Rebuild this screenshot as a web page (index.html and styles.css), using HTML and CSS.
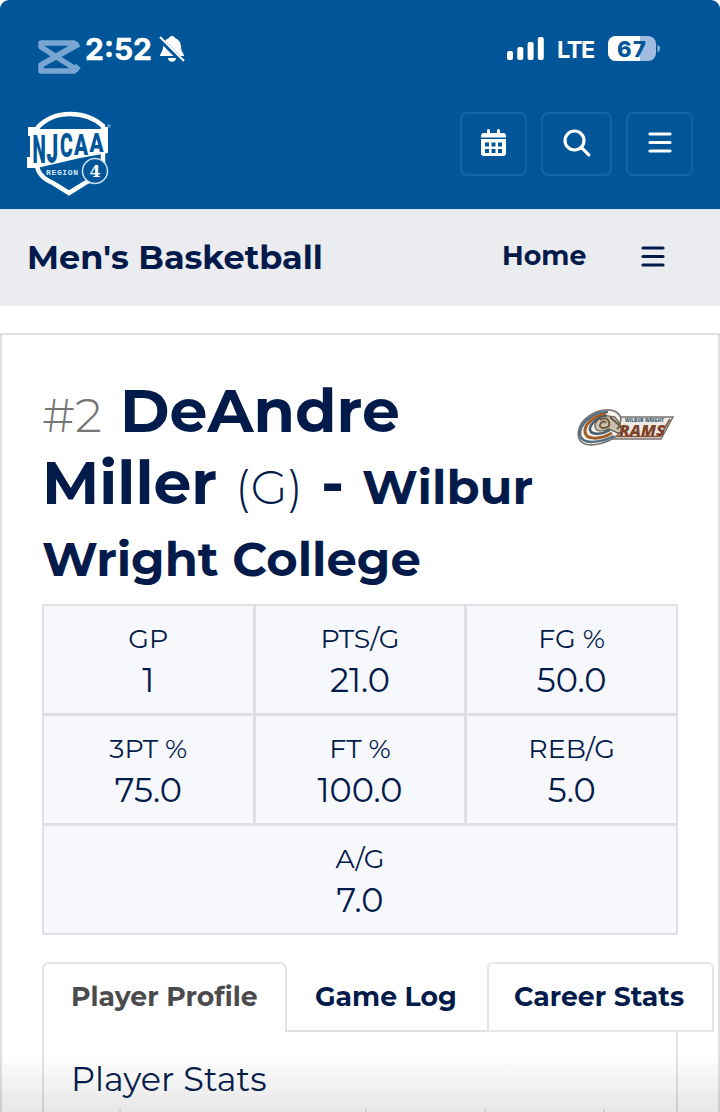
FILE: index.html
```html
<!DOCTYPE html>
<html lang="en">
<head>
<meta charset="utf-8">
<title>DeAndre Miller - Men's Basketball</title>
<link rel="stylesheet" href="styles.css">
</head>
<body>
<div class="screen">
  <header class="masthead">
    <div class="status">
      <svg class="watermark" width="46" height="40" viewBox="0 0 46 40"><path d="M44 7 6 28v6h33v-3L6 10V6h33v3L6 28M39 29l5 4" fill="none" stroke="currentColor" stroke-width="5.500" stroke-linejoin="round"/></svg>
      <span class="time">2:52</span>
      <svg class="bell" width="26" height="28" viewBox="0 0 26 28"><path d="M13 1c2 0 2.500 1 3 2 4 1.500 6 4.500 6 9 0 5 3 6 3 9H1c0-3 3-4 3-9 0-4.500 2-7.500 6-9 .5-1 1-2 3-2zM9 23h8c0 5-8 5-8 0z" fill="#fff"/><path d="M0 3 24 27" stroke="#005698" stroke-width="5"/><path d="M1 2 25 26" stroke="#fff" stroke-width="2"/></svg>
      <svg class="signal" width="37" height="24" viewBox="0 0 37 24" fill="#fff"><rect y="14" width="6" height="9" rx="2"/><rect x="10.300" y="10" width="6" height="13" rx="2"/><rect x="20.600" y="5" width="6" height="18" rx="2"/><rect x="30.800" width="6" height="23" rx="2"/></svg>
      <span class="network">LTE</span>
      <svg class="battery" width="53" height="26" viewBox="0 0 53 26"><rect width="48" height="25" rx="8" fill="#a2bce0"/><path d="M8 0h24v25H8a8 8 0 0 1-8-8V8a8 8 0 0 1 8-8z" fill="#fff"/><path d="M49.500 8.500q5 4 0 8z" fill="#8fb2d9"/><text x="9" y="20.500" class="charge" textLength="29">67</text></svg>
    </div>
    <div class="brandbar">
      <svg class="logo" width="88" height="86" viewBox="0 0 88 86">
        <path d="M12 18Q25 4 45 4t33 12v41Q75 67 60 73L44 83 28 73Q12 66 12 54V49" fill="none" stroke="#fff" stroke-width="4.500"/>
        <path d="M3 17h12v2h63v-2h5v26L55 48 12 58H2V47h3V26H3z" fill="#fff"/>
        <g class="logo-word">
          <text transform="translate(7.500 53) scale(1.050 2.200)">N</text>
          <text transform="translate(21.500 53) scale(1.150 2.250)">J</text>
          <text transform="translate(35 47) scale(1.080 1.800)">C</text>
          <text transform="translate(49 44.500) scale(1.150 1.650)">A</text>
          <text transform="translate(64.500 42) scale(1.150 1.480)">A</text>
        </g>
        <text class="logo-region" x="21" y="65" textLength="32">REGION</text>
        <circle cx="70" cy="61" r="12.500" fill="#005698" stroke="#cfe3f5" stroke-width="1.500"/>
        <circle cx="84" cy="16" r="1.800" fill="#5c9acb"/>
        <text class="logo-num" x="70" y="66.500" text-anchor="middle">4</text>
      </svg>
      <nav class="actions">
        <span class="action"><svg width="25" height="28" viewBox="0 0 25 28"><path d="M3 4h3V1.500a1.500 1.500 0 0 1 3 0V4h7V1.500a1.500 1.500 0 0 1 3 0V4h3q3 0 3 3v1.500H0V7q0-3 3-3zM0 10h25v14q0 3-3 3H3q-3 0-3-3z" fill="#fff"/><path d="M4 13.500h4v4H4zm6.500 0h4v4h-4zm6.500 0h4v4h-4zM4 20h4v4H4zm6.500 0h4v4h-4zm6.500 0h4v4h-4z" fill="#005698"/></svg></span>
        <span class="action action-search"><svg width="28" height="28" viewBox="0 0 28 28" fill="none" stroke="#fff" stroke-width="3.200" stroke-linecap="round"><circle cx="11.500" cy="11.500" r="9.500"/><path d="m18.800 18.800 7 7"/></svg></span>
        <span class="action"><svg width="24" height="22" viewBox="0 0 24 22" stroke="#fff" stroke-width="3.200" stroke-linecap="round"><path d="M2 2h20M2 10.500h20M2 19h20"/></svg></span>
      </nav>
    </div>
  </header>
  <div class="sportbar">
    <strong class="sport">Men's Basketball</strong>
    <span class="home">Home</span>
    <svg width="24" height="22" viewBox="0 0 24 22" stroke="#031b4a" stroke-width="3.200" stroke-linecap="round"><path d="M2 2h20M2 10.500h20M2 19h20"/></svg>
  </div>
  <main class="card">
    <div class="player">
      <h1 class="name">
        <span class="line"><span class="number">#2</span><span class="big first">DeAndre</span></span>
        <span class="line"><span class="big last">Miller</span><span class="position">(G)</span><span class="big dash">-</span><span class="school">Wilbur</span></span>
        <span class="line college"><span class="school">Wright College</span></span>
      </h1>
      <svg class="rams" width="98" height="40" viewBox="0 0 98 40">
        <path d="M39 9h57L84 31H34z" fill="#eee9e2" stroke="#77736f" stroke-width="1.500"/>
        <path d="M35 28.500h48L93 11" fill="none" stroke="#855038" stroke-width="1.600"/>
        <path d="M44 10C40-1 24 0 12 8-1 17-2 32 8 36c10 3 24-2 33-9z" fill="#f5f2ec" stroke="#777" stroke-width="1.700"/>
        <path d="M31 4C14 4 2 17 3 27c2 10 20 8 34 1" fill="none" stroke="#536e80" stroke-width="2.500"/>
        <path d="M29 6C16 8 7 17 8 24c1 8 15 8 27 1" fill="none" stroke="#a45c22" stroke-width="3"/>
        <path d="M30 8c-10 1-18 9-17 14 2 6 13 4 20 0" fill="none" stroke="#425d70" stroke-width="2.500"/>
        <path d="M32 8c-8-1-15 6-14 11 1 6 10 4 14 2l9 4 4-1-2-8-5-7z" fill="#cbc0ae" stroke="#5b5953" stroke-width="1.200"/>
        <path d="M23 12q7-4 9 2t-6 6q-5-1-2-5 3-3 5 0M33 9l10 9-3 3" fill="none" stroke="#68543b" stroke-width="1.800"/>
        <text class="rams-top" x="48" y="14" textLength="39" lengthAdjust="spacingAndGlyphs">WILBUR WRIGHT</text>
        <text class="rams-word" x="42" y="27.500" textLength="46" lengthAdjust="spacingAndGlyphs">RAMS</text>
      </svg>
    </div>
    <div class="stats">
      <div class="stat"><span class="label">GP</span><span class="value">1</span></div>
      <div class="stat"><span class="label">PTS/G</span><span class="value">21.0</span></div>
      <div class="stat"><span class="label">FG %</span><span class="value">50.0</span></div>
      <div class="stat"><span class="label">3PT %</span><span class="value">75.0</span></div>
      <div class="stat"><span class="label">FT %</span><span class="value">100.0</span></div>
      <div class="stat"><span class="label">REB/G</span><span class="value">5.0</span></div>
      <div class="stat wide"><span class="label">A/G</span><span class="value">7.0</span></div>
    </div>
    <div class="tabs">
      <span class="tab active">Player Profile</span>
      <span class="tab log">Game Log</span>
      <span class="tab career">Career Stats</span>
    </div>
    <section class="panel">
      <h2 class="panel-title">Player Stats</h2>
      <div class="panel-table"><i></i><i></i><i></i><i></i><i></i></div>
    </section>
  </main>
  <div class="fade"></div>
</div>
</body>
</html>
```
FILE: styles.css
```css
* { box-sizing: border-box; }
body { margin: 0; background: #fff; color: #031b4a; font-family: Montserrat, Inter, sans-serif; }
svg { display: block; flex: none; }
.screen { position: relative; width: 720px; height: 1112px; overflow: hidden; }
.masthead { height: 209px; background: #005698; border-radius: 9px 9px 0 0; color: #fff; }
.status { height: 112px; padding: 0 59px 0 35px; display: flex; align-items: flex-start; font-family: Inter, sans-serif; font-weight: 700; }
.watermark { margin-top: 37px; color: #78a5d1; }
.time { margin: 31px 0 0 4px; width: 69px; font-size: 30px; line-height: 36px; white-space: nowrap; -webkit-text-stroke: .4px #fff; }
.bell { margin: 35px 0 0 5px; }
.signal { margin: 37px 0 0 auto; }
.network { margin: 34px 0 0 13px; width: 38px; font-size: 23.5px; line-height: 32px; letter-spacing: -1.4px; font-weight: 700; }
.battery { margin: 36px 0 0 13px; }
.charge { font: 800 22px Inter, sans-serif; fill: #005698; }
.brandbar { display: flex; justify-content: space-between; padding: 0 27px 0 25px; align-items: flex-start; }
.logo { margin-top: -2px; overflow: visible; }
.logo-word { font: 900 18px Roboto, sans-serif; fill: #005698; }
.logo-region { font: 600 8px "Liberation Mono", monospace; fill: #d8e9fb; }
.logo-num { font: bold 16px "DejaVu Serif", serif; fill: #fff; }
.actions { display: flex; gap: 14px; }
.action { width: 67px; height: 64px; border: 2px solid #0f66a8; border-radius: 7px; display: flex; align-items: center; justify-content: center; padding-bottom: 3px; }
.action-search { width: 71px; }
.sportbar { height: 97px; padding: 0 55px 0 27px; background: #ebecef; border-top: 1px solid #d6e5ef; display: flex; align-items: center; }
.sport { font-size: 33.5px; line-height: 40px; flex: 1; white-space: nowrap; margin-bottom: 2px; }
.home { font-size: 26.800px; line-height: 32px; font-weight: 700; width: 84px; margin: 0 55px 4px 0; }
.sportbar svg { margin-bottom: 3px; }
.card { margin-top: 27px; height: 800px; border: 2px solid #dfe0e3; padding: 40px 0 0 40px; }
.player { display: flex; justify-content: space-between; padding-right: 43px; height: 229px; }
.name { margin: 0; font-size: 60px; font-weight: 700; }
.line { display: flex; align-items: baseline; height: 72px; line-height: 72px; white-space: nowrap; }
.college { padding-top: 4px; }
.number { width: 78px; font-size: 48px; font-weight: 300; color: #757575; }
.big { font-size: 60px; }
.last { width: 193px; }
.position { width: 86px; font-size: 48px; font-weight: 300; }
.dash { width: 41px; }
.school { font-size: 48px; }
.rams { margin-top: 33px; }
.rams-top { font: 800 5px "Open Sans", sans-serif; fill: #3f6173; }
.rams-word { font: italic 800 16px "Open Sans", sans-serif; fill: #7d4228; }
.stats { width: 636px; height: 331px; display: grid; grid-template-columns: repeat(3, 1fr); grid-template-rows: repeat(3, 1fr); gap: 3px; background: #dfe0e5; border: 2px solid #dfe0e5; }
.stat { background: #f6f8fc; padding-top: 17px; display: flex; flex-direction: column; align-items: center; }
.wide { grid-column: 1 / 4; }
.label { font-size: 26.800px; line-height: 32px; }
.value { font-size: 33.5px; line-height: 42px; margin-top: 4px; }
.tabs { display: flex; margin-top: 27px; height: 70px; font-size: 26.700px; font-weight: 700; line-height: 65px; white-space: nowrap; }
.tab { border-bottom: 2px solid #e1e1e3; }
.active { width: 245px; padding-left: 27px; color: #4b4b4d; border: 2px solid #e4e4e6; border-bottom: 0; border-radius: 7px 7px 0 0; }
.log { width: 200px; padding: 2px 0 0 28px; }
.career { width: 227px; padding-left: 25px; border: 2px solid #e6e6e8; border-radius: 6px 6px 0 0; }
.panel { width: 636px; height: 82px; border: solid #e1e1e3; border-width: 0 2px; padding: 26px 0 0 27px; }
.panel-title { margin: 0; font-size: 33.5px; font-weight: 400; line-height: 42px; }
.panel-table { display: flex; margin: 9px 0 0 -27px; height: 5px; gap: 2px; background: #e6e6e8; }
.panel-table i { width: 117px; background: #fff; }
.panel-table i:first-child { width: 75px; }
.panel-table i:nth-child(2) { width: 244px; }
.panel-table i:last-child { flex: 1; }
.fade { position: absolute; left: 0; right: 0; bottom: 0; height: 58px; background: linear-gradient(rgba(80, 80, 80, 0), rgba(80, 80, 80, .14)); }
```
